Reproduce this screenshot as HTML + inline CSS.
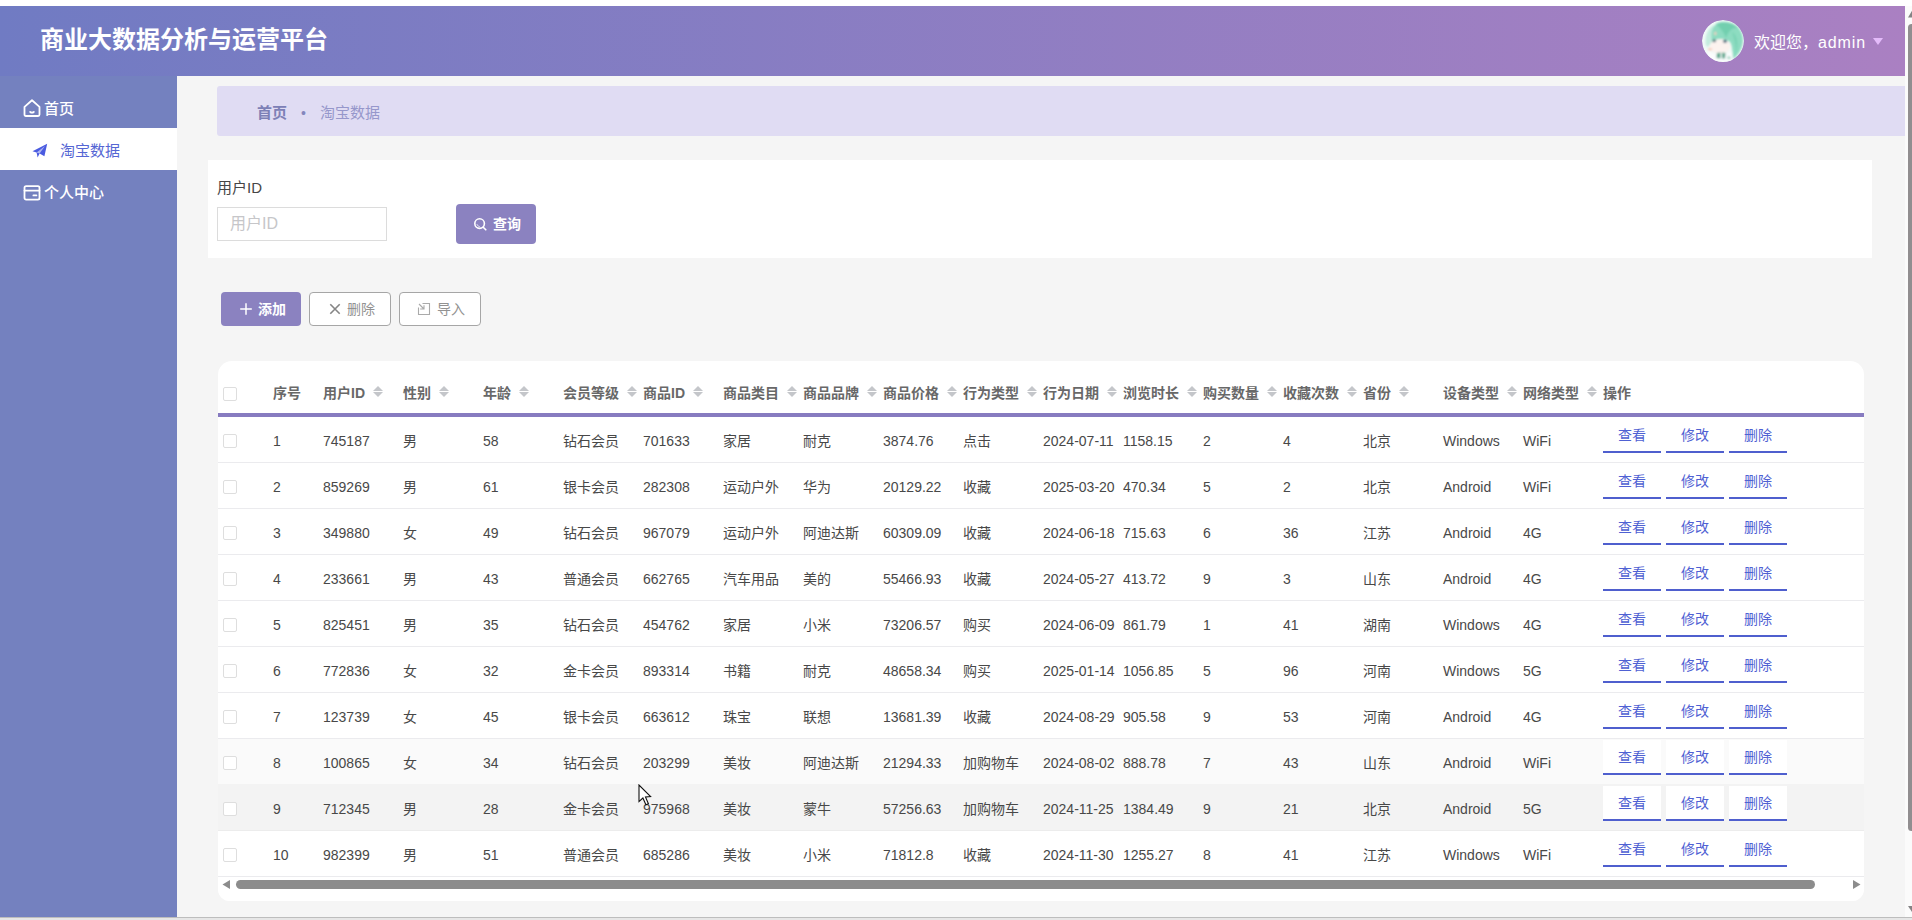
<!DOCTYPE html>
<html lang="zh-CN">
<head>
<meta charset="utf-8">
<title>商业大数据分析与运营平台</title>
<style>
*{box-sizing:border-box;margin:0;padding:0}
html,body{width:1912px;height:920px;overflow:hidden;background:#fff}
body{font-family:"Liberation Sans","Noto Sans CJK SC",sans-serif;font-size:14px;color:#444;position:relative}
.abs{position:absolute}
#hdr{left:0;top:6px;width:1905px;height:70px;background:linear-gradient(90deg,#707bc3 0%,#aa80c2 100%)}
#title{left:40px;top:18.5px;height:30px;line-height:30px;font-size:24px;font-weight:700;color:#fff;white-space:nowrap}
#avatar{left:1702px;top:14px;width:42px;height:42px;border-radius:50%;overflow:hidden}
#welcome{left:1754px;top:24px;height:26px;line-height:26px;font-size:16px;color:#fff;white-space:nowrap}
#caret{left:1872.5px;top:32px;width:0;height:0;border-left:5.5px solid transparent;border-right:5.5px solid transparent;border-top:7.5px solid #e4bbfa}
#side{left:0;top:76px;width:177px;height:841px;background:#7481bf}
.mi{position:absolute;left:0;width:177px;height:42px;line-height:42px;font-size:15px;color:#fff;white-space:nowrap}
.mi svg{position:absolute}
.mi span{position:absolute;top:1.5px}
#main{left:177px;top:76px;width:1728px;height:841px;background:#f5f5f5}
#bc{left:217px;top:86px;width:1688px;height:50px;background:#e0dcf3;border-radius:3px 0 0 3px;font-size:15px;line-height:50px;white-space:nowrap}
#bc span{position:absolute;top:1.5px}
#sp{left:208px;top:160px;width:1664px;height:98px;background:#fff}
#lbl{left:217px;top:175.5px;height:24px;line-height:24px;font-size:15px;color:#464646;white-space:nowrap}
#inp{left:217px;top:207px;width:170px;height:34px;border:1px solid #dcdcdc;background:#fff;font-size:16px;line-height:31px;color:#c6c6c9;padding-left:12px;white-space:nowrap}
.btn{position:absolute;border-radius:4px;font-size:14px;white-space:nowrap}
.btn span{position:absolute}
.btn svg{position:absolute}
.pb{background:#8b82c0;color:#fff;font-weight:700}
.gb{background:#fff;border:1px solid #a6a6a6;color:#929292}
#tw{left:218px;top:361px;width:1646px;height:540px;background:#fff;border-radius:14px 14px 12px 12px;overflow:hidden}
table.tb{border-collapse:separate;border-spacing:0;table-layout:fixed;width:1646px;position:absolute;left:0;top:0}
.tb th{height:56px;border-bottom:4px solid #877bc0;text-align:left;font-weight:700;color:#686868;font-size:14px;padding:0;vertical-align:top}
.tb td{height:46px;border-bottom:1px solid #ebebee;padding:0;font-size:14px;color:#484848;vertical-align:top}
.tb .c{padding-left:10px;white-space:nowrap;line-height:23px;overflow:visible}
.tb th .c{padding-top:21px}
.tb th b{font-weight:700}
.tb td .c{padding-top:13px}
.tb .ck{position:relative}
.cb{position:absolute;left:5px;width:14px;height:14px;border:1px solid #dedede;border-radius:2px;background:#fff}
th .cb{top:26px}
td .cb{top:17px}
.sort{display:inline-block;position:relative;width:24px;height:23px;vertical-align:top;margin-top:-1px}
.sort i{position:absolute;left:8px;width:0;height:0;border-left:5px solid transparent;border-right:5px solid transparent}
.sort .up{top:4.5px;border-bottom:5px solid #c4c6ca}
.sort .dn{top:11px;border-top:5px solid #c4c6ca}
.tb tr.r8 td{background:#fafafa;border-bottom-color:#f3f3f3}
.tb tr.r9 td{background:#f3f3f3;border-bottom-color:#ececec}
.op{padding-left:10px !important;white-space:nowrap;font-size:0 !important}
.ob{display:inline-block;width:58px;height:35px;margin:1px 5px 0 0;border-bottom:2px solid #4f5fce;background:#fff;color:#4f61d3;font-size:14px;line-height:34.5px;text-align:center}
.tr8 .ob{background:transparent}
#hs{left:0;top:516px;width:1646px;height:24px;background:#fff}
#vs{left:1905px;top:6px;width:7px;height:911px;background:#fbfbfb}
</style>
</head>
<body>
<div id="hdr" class="abs">
  <div id="title" class="abs">商业大数据分析与运营平台</div>
  <div id="avatar" class="abs">
    <svg width="42" height="42" viewBox="0 0 42 42">
      <defs><filter id="bl" x="-20%" y="-20%" width="140%" height="140%"><feGaussianBlur stdDeviation="0.8"/></filter></defs>
      <circle cx="21" cy="21" r="21" fill="#f1faf8"/>
      <g filter="url(#bl)">
        <path d="M4 26 C2 16 6 8 12 5 C11 12 9 18 10 22 C8 25 6 28 4 26Z" fill="#c4ecdf"/>
        <path d="M10 22 C8 12 11 5 16 3 C24 0 37 3 40 14 C43 24 38 34 31 39 C30 33 31 27 28 22 C24 18 14 18 10 22Z" fill="#8ddcc1"/>
        <path d="M14 4 C20 1 30 2 36 8 C30 7 26 12 24 18 C22 12 18 8 14 4Z" fill="#72cfaf"/>
        <path d="M30 12 C36 16 37 28 32 38 C36 30 33 20 30 12Z" fill="#76d1b2"/>
        <ellipse cx="18" cy="26.5" rx="10.5" ry="7.2" fill="#fcf3ef"/>
        <path d="M6 30 C10 36 24 36 30 31 L31 42 L6 42Z" fill="#fbfdfd"/>
        <ellipse cx="12.3" cy="20.8" rx="1.8" ry="1.5" fill="#56707a"/>
        <ellipse cx="23" cy="21.2" rx="2" ry="1.7" fill="#46687a"/>
        <ellipse cx="8" cy="29.3" rx="2.2" ry="1.1" fill="#f9c4ad"/>
        <ellipse cx="13.3" cy="13.5" rx="1.2" ry="1.7" fill="#f3cfc2"/>
        <path d="M15 33 L18.5 32.5 L18.5 38.5 L14.5 38Z M20 32.5 L23.5 33 L23 38.5 L20 38.5Z" fill="#57a68b"/>
        <path d="M26.5 36 L29.5 38.5 L25 38.8Z" fill="#7cc7ad"/>
      </g>
    </svg>
  </div>
  <div id="welcome" class="abs">欢迎您，<span style="letter-spacing:.9px">admin</span></div>
  <div id="caret" class="abs"></div>
</div>

<div id="side" class="abs">
  <div class="mi" style="top:10px;font-weight:500">
    <svg style="left:23px;top:13px" width="18" height="19" viewBox="0 0 18 19" fill="none" stroke="#fff" stroke-width="1.8" stroke-linejoin="round" stroke-linecap="round"><path d="M1.5 7.9 L9 1.3 L16.5 7.9 V15.6 Q16.5 17 15.1 17 H2.9 Q1.5 17 1.5 15.6 Z"/><path d="M7.2 12.9 Q9 14.2 10.8 12.9"/></svg>
    <span style="left:44px">首页</span>
  </div>
  <div class="mi" style="top:52px;background:#fff;color:#5566d4">
    <svg style="left:32px;top:14.5px" width="16" height="16" viewBox="0 0 16 16"><path d="M0.5 8.2 L15.2 0.8 L12.4 13.2 L7.6 10.6 L5.6 14.6 L4.6 9.4 Z" fill="#4a5be0"/><path d="M4.6 9.4 L13 3 L7.6 10.6" fill="#fff" opacity=".55"/></svg>
    <span style="left:60px">淘宝数据</span>
  </div>
  <div class="mi" style="top:94px;font-weight:500">
    <svg style="left:23px;top:13.5px" width="18" height="18" viewBox="0 0 18 18" fill="none" stroke="#fff" stroke-width="1.8" stroke-linejoin="round" stroke-linecap="round"><rect x="1.5" y="2.2" width="15" height="13.4" rx="1.6"/><path d="M1.5 6.6 H16.5"/><path d="M10.4 11.4 H13.4"/></svg>
    <span style="left:44px">个人中心</span>
  </div>
</div>

<div id="main" class="abs"></div>
<div id="bc" class="abs">
  <span style="left:40px;font-weight:700;color:#7d80b6">首页</span>
  <span style="left:84px;color:#8486bd;font-size:14px">•</span>
  <span style="left:103px;color:#9697cb">淘宝数据</span>
</div>

<div id="sp" class="abs"></div>
<div id="lbl" class="abs">用户ID</div>
<div id="inp" class="abs">用户ID</div>
<div class="btn pb" style="left:456px;top:204px;width:80px;height:40px;line-height:40px">
  <svg style="left:17px;top:12.5px" width="15" height="15" viewBox="0 0 15 15" fill="none" stroke="#fff" stroke-width="1.6" stroke-linecap="round"><circle cx="6.6" cy="6.6" r="4.8"/><path d="M10.2 10.2 L12.8 12.8"/><path d="M3.9 7.4 A2.9 2.9 0 0 0 6.4 9.6" stroke-width="1" opacity=".7"/></svg>
  <span style="left:37px;top:0">查询</span>
</div>

<div class="btn pb" style="left:221px;top:292px;width:80px;height:34px;line-height:34px">
  <svg style="left:18px;top:9.5px" width="14" height="14" viewBox="0 0 14 14" stroke="#fff" stroke-width="1.5" stroke-linecap="butt"><path d="M7 1.2 V12.8 M1.2 7 H12.8"/></svg>
  <span style="left:37px;top:0">添加</span>
</div>
<div class="btn gb" style="left:309px;top:292px;width:82px;height:34px;line-height:32px">
  <svg style="left:18.5px;top:9.5px" width="12" height="12" viewBox="0 0 12 12" stroke="#858585" stroke-width="1.6"><path d="M1.3 1.3 L10.7 10.7 M10.7 1.3 L1.3 10.7"/></svg>
  <span style="left:37px;top:0">删除</span>
</div>
<div class="btn gb" style="left:399px;top:292px;width:82px;height:34px;line-height:32px">
  <svg style="left:17px;top:9px" width="14" height="14" viewBox="0 0 14 14" fill="none" stroke="#aaa" stroke-width="1.1"><path d="M5.5 1.5 H12.5 V12.5 H1.5 V5.5"/><path d="M2 2 L7 7 M7 3.2 V7 H3.2"/></svg>
  <span style="left:37px;top:0">导入</span>
</div>

<div id="tw" class="abs">
<table class="tb"><colgroup><col style="width:45px"><col style="width:50px"><col style="width:80px"><col style="width:80px"><col style="width:80px"><col style="width:80px"><col style="width:80px"><col style="width:80px"><col style="width:80px"><col style="width:80px"><col style="width:80px"><col style="width:80px"><col style="width:80px"><col style="width:80px"><col style="width:80px"><col style="width:80px"><col style="width:80px"><col style="width:80px"><col style="width:271px"></colgroup>
<thead><tr><th class="ck"><span class="cb"></span></th>
<th><div class="c">序号</div></th>
<th><div class="c">用户<b>ID</b><span class="sort"><i class="up"></i><i class="dn"></i></span></div></th>
<th><div class="c">性别<span class="sort"><i class="up"></i><i class="dn"></i></span></div></th>
<th><div class="c">年龄<span class="sort"><i class="up"></i><i class="dn"></i></span></div></th>
<th><div class="c">会员等级<span class="sort"><i class="up"></i><i class="dn"></i></span></div></th>
<th><div class="c">商品<b>ID</b><span class="sort"><i class="up"></i><i class="dn"></i></span></div></th>
<th><div class="c">商品类目<span class="sort"><i class="up"></i><i class="dn"></i></span></div></th>
<th><div class="c">商品品牌<span class="sort"><i class="up"></i><i class="dn"></i></span></div></th>
<th><div class="c">商品价格<span class="sort"><i class="up"></i><i class="dn"></i></span></div></th>
<th><div class="c">行为类型<span class="sort"><i class="up"></i><i class="dn"></i></span></div></th>
<th><div class="c">行为日期<span class="sort"><i class="up"></i><i class="dn"></i></span></div></th>
<th><div class="c">浏览时长<span class="sort"><i class="up"></i><i class="dn"></i></span></div></th>
<th><div class="c">购买数量<span class="sort"><i class="up"></i><i class="dn"></i></span></div></th>
<th><div class="c">收藏次数<span class="sort"><i class="up"></i><i class="dn"></i></span></div></th>
<th><div class="c">省份<span class="sort"><i class="up"></i><i class="dn"></i></span></div></th>
<th><div class="c">设备类型<span class="sort"><i class="up"></i><i class="dn"></i></span></div></th>
<th><div class="c">网络类型<span class="sort"><i class="up"></i><i class="dn"></i></span></div></th>
<th><div class="c">操作</div></th>
</tr></thead><tbody>
<tr><td class="ck"><span class="cb"></span></td>
<td><div class="c">1</div></td>
<td><div class="c">745187</div></td>
<td><div class="c">男</div></td>
<td><div class="c">58</div></td>
<td><div class="c">钻石会员</div></td>
<td><div class="c">701633</div></td>
<td><div class="c">家居</div></td>
<td><div class="c">耐克</div></td>
<td><div class="c">3874.76</div></td>
<td><div class="c">点击</div></td>
<td><div class="c">2024-07-11</div></td>
<td><div class="c">1158.15</div></td>
<td><div class="c">2</div></td>
<td><div class="c">4</div></td>
<td><div class="c">北京</div></td>
<td><div class="c">Windows</div></td>
<td><div class="c">WiFi</div></td>
<td class="op"><span class="ob">查看</span><span class="ob">修改</span><span class="ob">删除</span></td></tr>
<tr><td class="ck"><span class="cb"></span></td>
<td><div class="c">2</div></td>
<td><div class="c">859269</div></td>
<td><div class="c">男</div></td>
<td><div class="c">61</div></td>
<td><div class="c">银卡会员</div></td>
<td><div class="c">282308</div></td>
<td><div class="c">运动户外</div></td>
<td><div class="c">华为</div></td>
<td><div class="c">20129.22</div></td>
<td><div class="c">收藏</div></td>
<td><div class="c">2025-03-20</div></td>
<td><div class="c">470.34</div></td>
<td><div class="c">5</div></td>
<td><div class="c">2</div></td>
<td><div class="c">北京</div></td>
<td><div class="c">Android</div></td>
<td><div class="c">WiFi</div></td>
<td class="op"><span class="ob">查看</span><span class="ob">修改</span><span class="ob">删除</span></td></tr>
<tr><td class="ck"><span class="cb"></span></td>
<td><div class="c">3</div></td>
<td><div class="c">349880</div></td>
<td><div class="c">女</div></td>
<td><div class="c">49</div></td>
<td><div class="c">钻石会员</div></td>
<td><div class="c">967079</div></td>
<td><div class="c">运动户外</div></td>
<td><div class="c">阿迪达斯</div></td>
<td><div class="c">60309.09</div></td>
<td><div class="c">收藏</div></td>
<td><div class="c">2024-06-18</div></td>
<td><div class="c">715.63</div></td>
<td><div class="c">6</div></td>
<td><div class="c">36</div></td>
<td><div class="c">江苏</div></td>
<td><div class="c">Android</div></td>
<td><div class="c">4G</div></td>
<td class="op"><span class="ob">查看</span><span class="ob">修改</span><span class="ob">删除</span></td></tr>
<tr><td class="ck"><span class="cb"></span></td>
<td><div class="c">4</div></td>
<td><div class="c">233661</div></td>
<td><div class="c">男</div></td>
<td><div class="c">43</div></td>
<td><div class="c">普通会员</div></td>
<td><div class="c">662765</div></td>
<td><div class="c">汽车用品</div></td>
<td><div class="c">美的</div></td>
<td><div class="c">55466.93</div></td>
<td><div class="c">收藏</div></td>
<td><div class="c">2024-05-27</div></td>
<td><div class="c">413.72</div></td>
<td><div class="c">9</div></td>
<td><div class="c">3</div></td>
<td><div class="c">山东</div></td>
<td><div class="c">Android</div></td>
<td><div class="c">4G</div></td>
<td class="op"><span class="ob">查看</span><span class="ob">修改</span><span class="ob">删除</span></td></tr>
<tr><td class="ck"><span class="cb"></span></td>
<td><div class="c">5</div></td>
<td><div class="c">825451</div></td>
<td><div class="c">男</div></td>
<td><div class="c">35</div></td>
<td><div class="c">钻石会员</div></td>
<td><div class="c">454762</div></td>
<td><div class="c">家居</div></td>
<td><div class="c">小米</div></td>
<td><div class="c">73206.57</div></td>
<td><div class="c">购买</div></td>
<td><div class="c">2024-06-09</div></td>
<td><div class="c">861.79</div></td>
<td><div class="c">1</div></td>
<td><div class="c">41</div></td>
<td><div class="c">湖南</div></td>
<td><div class="c">Windows</div></td>
<td><div class="c">4G</div></td>
<td class="op"><span class="ob">查看</span><span class="ob">修改</span><span class="ob">删除</span></td></tr>
<tr><td class="ck"><span class="cb"></span></td>
<td><div class="c">6</div></td>
<td><div class="c">772836</div></td>
<td><div class="c">女</div></td>
<td><div class="c">32</div></td>
<td><div class="c">金卡会员</div></td>
<td><div class="c">893314</div></td>
<td><div class="c">书籍</div></td>
<td><div class="c">耐克</div></td>
<td><div class="c">48658.34</div></td>
<td><div class="c">购买</div></td>
<td><div class="c">2025-01-14</div></td>
<td><div class="c">1056.85</div></td>
<td><div class="c">5</div></td>
<td><div class="c">96</div></td>
<td><div class="c">河南</div></td>
<td><div class="c">Windows</div></td>
<td><div class="c">5G</div></td>
<td class="op"><span class="ob">查看</span><span class="ob">修改</span><span class="ob">删除</span></td></tr>
<tr><td class="ck"><span class="cb"></span></td>
<td><div class="c">7</div></td>
<td><div class="c">123739</div></td>
<td><div class="c">女</div></td>
<td><div class="c">45</div></td>
<td><div class="c">银卡会员</div></td>
<td><div class="c">663612</div></td>
<td><div class="c">珠宝</div></td>
<td><div class="c">联想</div></td>
<td><div class="c">13681.39</div></td>
<td><div class="c">收藏</div></td>
<td><div class="c">2024-08-29</div></td>
<td><div class="c">905.58</div></td>
<td><div class="c">9</div></td>
<td><div class="c">53</div></td>
<td><div class="c">河南</div></td>
<td><div class="c">Android</div></td>
<td><div class="c">4G</div></td>
<td class="op"><span class="ob">查看</span><span class="ob">修改</span><span class="ob">删除</span></td></tr>
<tr class="r8"><td class="ck"><span class="cb"></span></td>
<td><div class="c">8</div></td>
<td><div class="c">100865</div></td>
<td><div class="c">女</div></td>
<td><div class="c">34</div></td>
<td><div class="c">钻石会员</div></td>
<td><div class="c">203299</div></td>
<td><div class="c">美妆</div></td>
<td><div class="c">阿迪达斯</div></td>
<td><div class="c">21294.33</div></td>
<td><div class="c">加购物车</div></td>
<td><div class="c">2024-08-02</div></td>
<td><div class="c">888.78</div></td>
<td><div class="c">7</div></td>
<td><div class="c">43</div></td>
<td><div class="c">山东</div></td>
<td><div class="c">Android</div></td>
<td><div class="c">WiFi</div></td>
<td class="op"><span class="ob">查看</span><span class="ob">修改</span><span class="ob">删除</span></td></tr>
<tr class="r9"><td class="ck"><span class="cb"></span></td>
<td><div class="c">9</div></td>
<td><div class="c">712345</div></td>
<td><div class="c">男</div></td>
<td><div class="c">28</div></td>
<td><div class="c">金卡会员</div></td>
<td><div class="c">975968</div></td>
<td><div class="c">美妆</div></td>
<td><div class="c">蒙牛</div></td>
<td><div class="c">57256.63</div></td>
<td><div class="c">加购物车</div></td>
<td><div class="c">2024-11-25</div></td>
<td><div class="c">1384.49</div></td>
<td><div class="c">9</div></td>
<td><div class="c">21</div></td>
<td><div class="c">北京</div></td>
<td><div class="c">Android</div></td>
<td><div class="c">5G</div></td>
<td class="op"><span class="ob">查看</span><span class="ob">修改</span><span class="ob">删除</span></td></tr>
<tr><td class="ck"><span class="cb"></span></td>
<td><div class="c">10</div></td>
<td><div class="c">982399</div></td>
<td><div class="c">男</div></td>
<td><div class="c">51</div></td>
<td><div class="c">普通会员</div></td>
<td><div class="c">685286</div></td>
<td><div class="c">美妆</div></td>
<td><div class="c">小米</div></td>
<td><div class="c">71812.8</div></td>
<td><div class="c">收藏</div></td>
<td><div class="c">2024-11-30</div></td>
<td><div class="c">1255.27</div></td>
<td><div class="c">8</div></td>
<td><div class="c">41</div></td>
<td><div class="c">江苏</div></td>
<td><div class="c">Windows</div></td>
<td><div class="c">WiFi</div></td>
<td class="op"><span class="ob">查看</span><span class="ob">修改</span><span class="ob">删除</span></td></tr>
</tbody></table>  <div id="hs" class="abs">
    <svg class="abs" style="left:0;top:0" width="1646" height="24" viewBox="0 0 1646 24">
      <path d="M12 3 V12 L4.5 7.5 Z" fill="#8c8c8c"/>
      <rect x="18" y="3" width="1579" height="9" rx="4.5" fill="#8c8c8c"/>
      <path d="M1635 3 V12 L1642.5 7.5 Z" fill="#8c8c8c"/>
    </svg>
  </div>
</div>

<div id="vs" class="abs">
  <svg class="abs" style="left:0;top:0" width="7" height="911" viewBox="0 0 7 911">
    <path d="M3 11.6 L7 4.8 V11.6 Z" fill="#858385"/>
    <rect x="3" y="18" width="12" height="807" rx="3.5" fill="#918e90"/>
    <path d="M3 900 H7 V906 Z" fill="#858385"/>
  </svg>
</div>
<div class="abs" style="left:0;top:917px;width:1912px;height:1px;background:#bdbdbd"></div>
<div class="abs" style="left:0;top:918px;width:1912px;height:2px;background:#e6e6e6"></div>
<svg class="abs" style="left:637.5px;top:784px" width="15" height="23" viewBox="0 0 15 23"><path d="M1 1 L1 17.6 L4.9 14 L7.9 20.8 L10.4 19.7 L7.5 13 L12.6 12.6 Z" fill="#fff" stroke="#111" stroke-width="1.1" stroke-linejoin="miter"/></svg>
</body>
</html>
